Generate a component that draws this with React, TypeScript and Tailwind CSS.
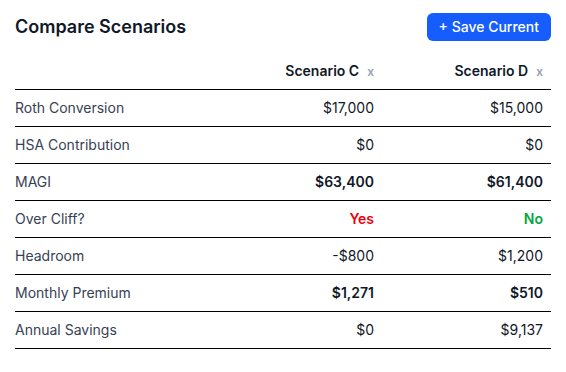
import React from 'react';

interface Row {
  label: string;
  c: string;
  d: string;
  bold?: boolean;
  cClass?: string;
  dClass?: string;
}

const rows: Row[] = [
  { label: 'Roth Conversion', c: '$17,000', d: '$15,000' },
  { label: 'HSA Contribution', c: '$0', d: '$0' },
  { label: 'MAGI', c: '$63,400', d: '$61,400', bold: true },
  { label: 'Over Cliff?', c: 'Yes', d: 'No', bold: true, cClass: 'text-red-600', dClass: 'text-green-600' },
  { label: 'Headroom', c: '-$800', d: '$1,200' },
  { label: 'Monthly Premium', c: '$1,271', d: '$510', bold: true },
  { label: 'Annual Savings', c: '$0', d: '$9,137' },
];

const ScenarioHead: React.FC<{ name: string }> = ({ name }) => (
  <th className="w-[169px] py-2 pr-2 text-right text-sm font-semibold text-gray-900">
    {name}
    <button className="ml-2 text-xs font-semibold text-gray-400">x</button>
  </th>
);

export default function App() {
  return (
    <div className="min-h-[372px] bg-white px-[15px] pt-[13px] font-['Inter',sans-serif] text-gray-900">
      <div className="flex items-center justify-between">
        <h2 className="text-lg font-semibold">Compare Scenarios</h2>
        <button className="rounded-md bg-blue-600 px-3 py-1 text-sm font-medium text-white">+ Save Current</button>
      </div>
      <table className="mt-3 w-full border-collapse">
        <thead>
          <tr className="border-b border-black">
            <th className="py-2" />
            <ScenarioHead name="Scenario C" />
            <ScenarioHead name="Scenario D" />
          </tr>
        </thead>
        <tbody>
          {rows.map((r) => (
            <tr key={r.label} className="border-b border-black">
              <td className="py-2 text-left text-sm text-gray-700">{r.label}</td>
              <td className={`py-2 pr-2 text-right text-sm ${r.bold ? 'font-semibold' : ''} ${r.cClass ?? 'text-gray-900'}`}>{r.c}</td>
              <td className={`py-2 pr-2 text-right text-sm ${r.bold ? 'font-semibold' : ''} ${r.dClass ?? 'text-gray-900'}`}>{r.d}</td>
            </tr>
          ))}
        </tbody>
      </table>
    </div>
  );
}
